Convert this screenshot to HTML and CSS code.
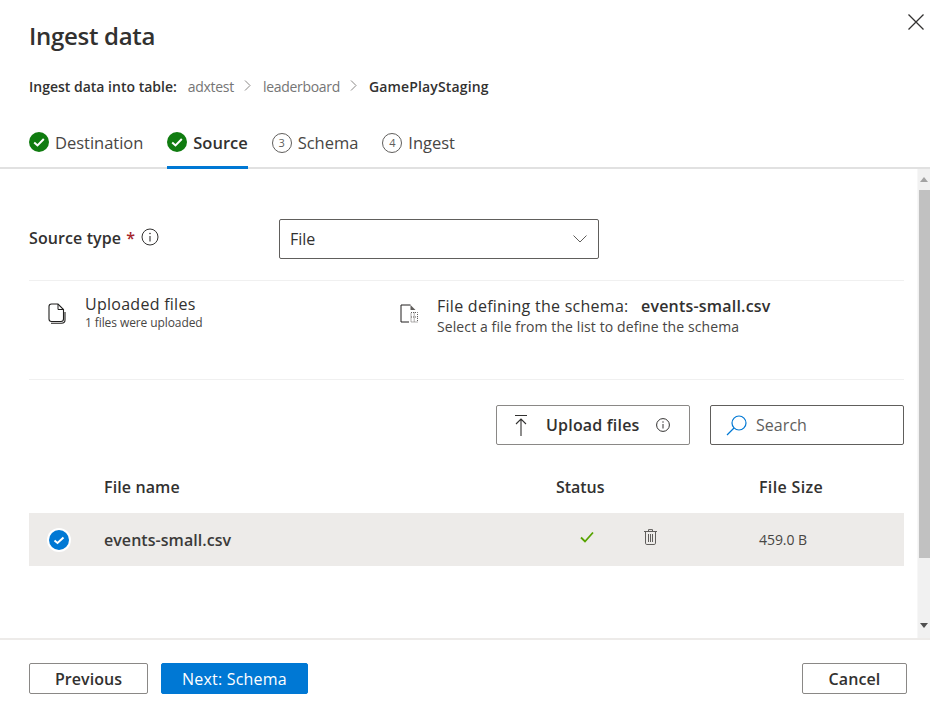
FILE: index.html

```html
<!DOCTYPE html>
<html lang="en">
<head>
    <meta charset="UTF-8">
    <meta name="viewport" content="width=device-width, initial-scale=1.0">
    <title>Ingest data</title>
    <link rel="stylesheet" href="styles.css">
</head>
<body>
    <div class="panel">
        <header class="panel-header">
            <div class="title-row">
                <h1>Ingest data</h1>
                <button class="close-btn" aria-label="Close">
                    <svg width="16" height="16" viewBox="0 0 16 16"><path d="M0.5 0.5L15.5 15.5M15.5 0.5L0.5 15.5" stroke="#323130" stroke-width="1.3" fill="none"/></svg>
                </button>
            </div>
            <div class="crumbs">
                <span class="crumbs-label">Ingest data into table:</span>
                <span class="crumb">adxtest</span>
                <svg class="crumb-sep" width="7" height="11" viewBox="0 0 7 11"><path d="M1 0.5L6 5.5L1 10.5" stroke="#8a8886" fill="none"/></svg>
                <span class="crumb">leaderboard</span>
                <svg class="crumb-sep" width="7" height="11" viewBox="0 0 7 11"><path d="M1 0.5L6 5.5L1 10.5" stroke="#8a8886" fill="none"/></svg>
                <span class="crumb-current">GamePlayStaging</span>
            </div>
        </header>

        <nav class="tabs">
            <div class="tab">
                <svg class="tab-icon" width="20" height="20" viewBox="0 0 20 20"><circle cx="10" cy="10" r="10" fill="#107c10"/><path d="M5.2 10.4L8.5 13.4L14.8 7" stroke="#fff" stroke-width="2" fill="none"/></svg>
                <span>Destination</span>
            </div>
            <div class="tab active">
                <svg class="tab-icon" width="20" height="20" viewBox="0 0 20 20"><circle cx="10" cy="10" r="10" fill="#107c10"/><path d="M5.2 10.4L8.5 13.4L14.8 7" stroke="#fff" stroke-width="2" fill="none"/></svg>
                <span>Source</span>
            </div>
            <div class="tab">
                <span class="step-num">3</span>
                <span>Schema</span>
            </div>
            <div class="tab">
                <span class="step-num">4</span>
                <span>Ingest</span>
            </div>
        </nav>

        <div class="panel-body">
            <main class="content">
                <div class="source-row">
                    <div class="source-label">
                        <span class="label-text">Source type</span>
                        <span class="required">*</span>
                        <svg class="info-lg" width="18" height="18" viewBox="0 0 18 18"><circle cx="9" cy="9" r="8" stroke="#323130" fill="none"/><path d="M9 8V13.5" stroke="#323130" stroke-width="1.1"/><circle cx="9" cy="5.5" r="0.8" fill="#323130"/></svg>
                    </div>
                    <div class="select">
                        <span>File</span>
                        <svg width="14" height="8" viewBox="0 0 14 8"><path d="M0.5 0.5L7 7L13.5 0.5" stroke="#605e5c" fill="none"/></svg>
                    </div>
                </div>

                <section class="info-row">
                    <div class="info-uploaded">
                        <svg class="file-icon" width="18" height="21" viewBox="0 0 18 21"><path d="M1 3.5C1 2 2 1 3.5 1H10L15.5 6.5V16C15.5 17.5 14.5 18.5 13 18.5H3.5C2 18.5 1 17.5 1 16Z" stroke="#201f1e" stroke-width="1.1" fill="none"/><path d="M10 1V6.5H15.5" stroke="#201f1e" fill="none"/><path d="M3 20.2H13.5C15.5 20.2 17 18.8 17 17V9" stroke="#201f1e" stroke-width="1.1" fill="none"/></svg>
                        <div>
                            <div class="info-title">Uploaded files</div>
                            <div class="info-small">1 files were uploaded</div>
                        </div>
                    </div>
                    <div class="info-schema">
                        <svg class="file-icon" width="18" height="19" viewBox="0 0 18 19"><path d="M9 18H1V1H10.5" stroke="#201f1e" fill="none"/><path d="M10.5 1V6H15.5L10.5 1Z" fill="#605e5c"/><path d="M11 8.5H17.5V18H11Z" stroke="#605e5c" stroke-dasharray="1 1" fill="none"/><path d="M14.2 8.5V18M11 13H17.5" stroke="#605e5c" stroke-dasharray="1 1" fill="none"/></svg>
                        <div>
                            <div class="info-title">File defining the schema: <strong class="schema-file">events-small.csv</strong></div>
                            <div class="info-sub">Select a file from the list to define the schema</div>
                        </div>
                    </div>
                </section>

                <div class="toolbar">
                    <button class="upload-btn">
                        <svg width="12" height="21" viewBox="0 0 12 21"><path d="M0 0.5H12M6 4V21M1 9L6 4L11 9" stroke="#323130" stroke-width="1.1" fill="none"/></svg>
                        <span class="upload-text">Upload files</span>
                        <svg width="14" height="14" viewBox="0 0 14 14"><circle cx="7" cy="7" r="6.4" stroke="#323130" fill="none"/><path d="M7 6V10.5" stroke="#323130"/><circle cx="7" cy="4" r="0.7" fill="#323130"/></svg>
                    </button>
                    <div class="search">
                        <svg width="21" height="21" viewBox="0 0 21 21"><circle cx="13" cy="8" r="7" stroke="#0078d4" stroke-width="1.2" fill="none"/><path d="M8 13L1 20" stroke="#0078d4" stroke-width="1.3"/></svg>
                        <span>Search</span>
                    </div>
                </div>

                <table class="files">
                    <thead>
                        <tr>
                            <th class="col-check"></th>
                            <th class="col-name">File name</th>
                            <th class="col-status">Status</th>
                            <th class="col-size">File Size</th>
                        </tr>
                    </thead>
                    <tbody>
                        <tr class="selected">
                            <td>
                                <svg class="row-check" width="24" height="24" viewBox="0 0 24 24"><circle cx="12" cy="12" r="12" fill="#fff"/><circle cx="12" cy="12" r="10" fill="#0078d4"/><path d="M7.5 12.5L10.5 15L16.5 9.5" stroke="#fff" stroke-width="2" fill="none"/></svg>
                            </td>
                            <td class="file-name">events-small.csv</td>
                            <td>
                                <div class="status-cell">
                                    <svg class="ok" width="14" height="12" viewBox="0 0 14 12"><path d="M1 6.5L5 10.5L13 1.5" stroke="#57a300" stroke-width="1.8" fill="none"/></svg>
                                    <svg width="13" height="16" viewBox="0 0 13 16"><path d="M0 2.5H13M4.5 2.5V0.6H8.5V2.5M1.5 2.5V14.2C1.5 15 2 15.5 2.8 15.5H10.2C11 15.5 11.5 15 11.5 14.2V2.5" stroke="#605e5c" fill="none"/><path d="M4.5 5V13M6.5 5V13M8.5 5V13" stroke="#605e5c"/></svg>
                                </div>
                            </td>
                            <td class="file-size">459.0 B</td>
                        </tr>
                    </tbody>
                </table>
            </main>
            <div class="scrollbar">
                <div class="arrow-up"></div>
                <div class="thumb"></div>
                <div class="arrow-down"></div>
            </div>
        </div>

        <footer class="panel-footer">
            <button class="btn">Previous</button>
            <button class="btn btn-primary">Next: Schema</button>
            <button class="btn btn-cancel">Cancel</button>
        </footer>
    </div>
</body>
</html>
```

FILE: styles.css

```css
* {
    box-sizing: border-box;
}

html, body {
    margin: 0;
    height: 100%;
}

body {
    font-family: "Open Sans", "Noto Sans", Arial, sans-serif;
    color: #323130;
    background: #fff;
    overflow: hidden;
}

button {
    font-family: inherit;
}

.panel {
    width: 930px;
    height: 703px;
    display: flex;
    flex-direction: column;
}

/* header */
.panel-header {
    padding: 0 0 0 29px;
    height: 127px;
}

.title-row {
    display: flex;
    justify-content: space-between;
    height: 77px;
}

h1 {
    margin: 0;
    padding-top: 19px;
    font-size: 24px;
    line-height: 33px;
    font-weight: 600;
    letter-spacing: -0.3px;
}

.close-btn {
    border: none;
    background: none;
    padding: 0;
    margin: 14px 6px 0 0;
    width: 16px;
    height: 16px;
    line-height: 0;
}

.crumbs {
    display: flex;
    align-items: center;
    height: 18px;
    font-size: 14px;
}

.crumbs-label {
    font-weight: 600;
    margin-right: 11px;
}

.crumb {
    color: #757575;
    letter-spacing: -0.3px;
}

.crumb-sep {
    margin: -1px 12px 0 10px;
}

.crumb-current {
    font-weight: 600;
    letter-spacing: 0.15px;
}

/* tabs */
.tabs {
    display: flex;
    gap: 24px;
    height: 42px;
    padding-left: 29px;
    border-bottom: 2px solid #e1e1e1;
    font-size: 16.5px;
    letter-spacing: -0.02px;
}

.tab {
    display: flex;
    align-items: center;
    gap: 6px;
    height: 42px;
    padding-bottom: 11px;
    color: #484644;
}

.tab.active {
    color: #323130;
    font-weight: 600;
    border-bottom: 3px solid #0078d4;
    padding-bottom: 8px;
}

.tab-icon {
    flex: none;
    margin-top: -1px;
}

.step-num {
    width: 20px;
    height: 20px;
    border: 1px solid #605e5c;
    border-radius: 50%;
    font-size: 11px;
    letter-spacing: 0;
    display: flex;
    align-items: center;
    justify-content: center;
    color: #605e5c;
}

/* scrolling body */
.panel-body {
    display: flex;
    height: 469px;
}

.content {
    flex: 1;
    padding: 50px 13px 0 29px;
}

.scrollbar {
    width: 13px;
    background: #f1f1f1;
    display: flex;
    flex-direction: column;
    align-items: flex-end;
    border-left: 1px solid #f7f7f7;
}

.arrow-up {
    width: 0;
    height: 0;
    margin: 8px 0 8px;
    border-left: 4px solid transparent;
    border-right: 4px solid transparent;
    border-bottom: 5px solid #a3a3a3;
    align-self: center;
}

.thumb {
    width: 11px;
    height: 368px;
    background: #c1c1c1;
}

.arrow-down {
    width: 0;
    height: 0;
    margin-top: 65px;
    border-left: 4px solid transparent;
    border-right: 4px solid transparent;
    border-top: 5px solid #505050;
    align-self: center;
}

.source-row {
    display: flex;
    align-items: center;
    height: 40px;
}

.source-label {
    width: 250px;
    display: flex;
    align-items: center;
    font-size: 16px;
    font-weight: 600;
    letter-spacing: 0.1px;
    padding-bottom: 2px;
}

.required {
    color: #a4262c;
    margin-left: 5px;
}

.info-lg {
    margin: -3px 0 0 6px;
}

.select {
    width: 320px;
    height: 40px;
    border: 1px solid #605e5c;
    border-radius: 2px;
    display: flex;
    align-items: center;
    justify-content: space-between;
    padding: 0 11px 0 10px;
    font-size: 16px;
}

.info-row {
    display: flex;
    height: 100px;
    margin-top: 21px;
    border-top: 1px solid #f0f0f0;
    border-bottom: 1px solid #f0f0f0;
}

.info-uploaded {
    display: flex;
    width: 371px;
    padding: 13px 0 0 19px;
}

.info-uploaded .file-icon {
    margin: 9px 19px 0 0;
}

.info-schema {
    display: flex;
    padding-top: 15px;
}

.info-schema .file-icon {
    margin: 8px 19px 0 0;
}

.info-title {
    font-size: 16px;
    line-height: 21px;
    letter-spacing: 0.27px;
}

.info-small {
    font-size: 12px;
    line-height: 16px;
    letter-spacing: -0.09px;
    color: #484644;
}

.info-sub {
    font-size: 14px;
    line-height: 20px;
    letter-spacing: 0.1px;
    color: #484644;
}

.schema-file {
    font-weight: 600;
    margin-left: 8px;
    letter-spacing: 0.2px;
}

.toolbar {
    display: flex;
    justify-content: flex-end;
    gap: 20px;
    margin-top: 25px;
}

.upload-btn {
    width: 194px;
    height: 40px;
    background: #fff;
    border: 1px solid #8a8886;
    border-radius: 2px;
    display: flex;
    align-items: center;
    padding: 0 0 0 18px;
    color: #323130;
}

.upload-text {
    font-size: 16px;
    font-weight: 600;
    letter-spacing: 0.2px;
    margin: 0 16px 0 19px;
}

.search {
    width: 194px;
    height: 40px;
    border: 1px solid #605e5c;
    border-radius: 2px;
    display: flex;
    align-items: center;
    gap: 9px;
    padding-left: 15px;
    font-size: 16px;
    letter-spacing: 0.05px;
    color: #605e5c;
}

/* file table */
.files {
    width: 875px;
    margin-top: 21px;
    border-collapse: collapse;
    table-layout: fixed;
}

.files th {
    height: 47px;
    padding: 0 0 5px 0;
    text-align: left;
    font-size: 16px;
    font-weight: 600;
    letter-spacing: 0.12px;
}

.files .col-status {
    width: 203px;
    letter-spacing: -0.05px;
}

.files .col-size {
    letter-spacing: 0.35px;
}

.col-check {
    width: 75px;
}

.col-name {
    width: 452px;
}

.files td {
    height: 53px;
    padding: 0;
}

.selected {
    background: #edebe9;
}

.row-check {
    display: block;
    margin-left: 18px;
}

.file-name {
    font-size: 16px;
    font-weight: 600;
    letter-spacing: 0.05px;
    color: #3b3a39;
}

.status-cell {
    display: flex;
    align-items: center;
    gap: 50px;
    padding: 0 0 6px 24px;
}

.file-size {
    font-size: 14px;
    letter-spacing: -0.05px;
    color: #484644;
}

/* footer */
.panel-footer {
    display: flex;
    align-items: flex-start;
    gap: 13px;
    padding: 23px 23px 0 29px;
    height: 65px;
    border-top: 2px solid #edebe9;
}

.btn {
    height: 31px;
    width: 119px;
    background: #fff;
    border: 1px solid #8a8886;
    border-radius: 2px;
    font-size: 16px;
    font-weight: 600;
    letter-spacing: 0.05px;
    color: #323130;
    padding: 0;
}

.btn-primary {
    width: 147px;
    background: #0078d4;
    border-color: #0078d4;
    color: #fff;
    font-weight: 400;
    letter-spacing: 0.2px;
}

.btn-cancel {
    width: 105px;
    margin-left: auto;
    letter-spacing: 0.1px;
}
```
